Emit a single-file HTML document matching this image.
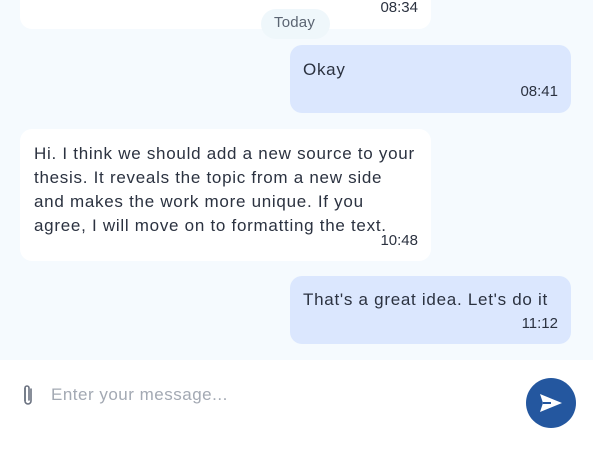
<!DOCTYPE html>
<html><head><meta charset="utf-8"><style>
*{margin:0;padding:0;box-sizing:border-box}
body{width:593px;height:451px;overflow:hidden;background:#f5fafe;font-family:"Liberation Sans",sans-serif;color:#2b3240;position:relative}
.b{position:absolute;border-radius:12px}
.in{background:#fff}
.out{background:#dbe7fe}
.t{position:absolute;font-size:15px;color:#2b3240;text-align:right;width:60px}
.m{position:absolute;font-size:17px;line-height:24px;white-space:nowrap;letter-spacing:0.72px}
</style></head><body>
<div class="b in" style="left:20px;top:-20px;width:411px;height:49px"></div>
<div class="t" style="left:358px;top:-1px">08:34</div>
<div style="position:absolute;left:261px;top:9px;width:69px;height:30px;border-radius:15px;background:#eff7fb"></div>
<div style="position:absolute;left:274px;top:14px;font-size:15px;color:#5b6472;letter-spacing:0.2px">Today</div>
<div class="b out" style="left:290px;top:45px;width:281px;height:68px"></div>
<div class="m" style="left:303px;top:58px">Okay</div>
<div class="t" style="left:498px;top:83px">08:41</div>
<div class="b in" style="left:20px;top:129px;width:411px;height:132px"></div>
<div class="m" style="left:34px;top:142px">Hi. I think we should add a new source to your<br>thesis. It reveals the topic from a new side<br>and makes the work more unique. If you<br>agree, I will move on to formatting the text.</div>
<div class="t" style="left:358px;top:232px">10:48</div>
<div class="b out" style="left:290px;top:276px;width:281px;height:68px"></div>
<div class="m" style="left:303px;top:288px">That's a great idea. Let's do it</div>
<div class="t" style="left:498px;top:315px">11:12</div>
<div style="position:absolute;left:0;top:360px;width:593px;height:91px;background:#fff"></div>
<svg style="position:absolute;left:20px;top:383px" width="16" height="26" viewBox="0 0 16 26"><path d="M11 6v12a3 3 0 0 1-6 0V5a2 2 0 0 1 4 0v12" fill="none" stroke="#6b7280" stroke-width="1.6" stroke-linecap="round"/><path d="M5 5v13" fill="none" stroke="#6b7280" stroke-width="1.6"/></svg>
<div style="position:absolute;left:51px;top:385px;font-size:17px;color:#a3a9b3;letter-spacing:0.5px">Enter your message...</div>
<div style="position:absolute;left:526px;top:378px;width:50px;height:50px;border-radius:50%;background:#24579f"></div>
<svg style="position:absolute;left:538px;top:391px" width="26" height="24" viewBox="0 0 26 24"><path d="M2 3L24 12L2 21L5 12Z" fill="#fff"/><path d="M5 12H13" stroke="#24579f" stroke-width="2"/></svg>
</body></html>
